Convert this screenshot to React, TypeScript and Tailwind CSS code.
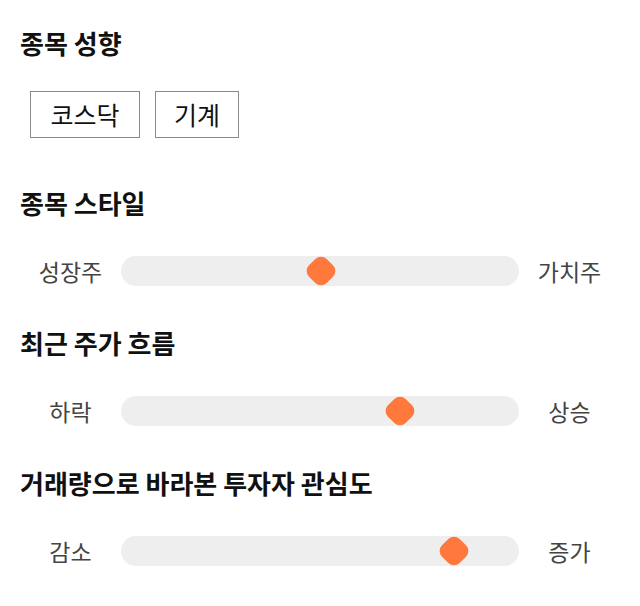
import React from "react";

const font = { fontFamily: '"Noto Sans CJK KR", "Noto Sans", sans-serif' };

type SliderProps = { left: string; right: string; pos: number };

function Slider({ left, right, pos }: SliderProps) {
  return (
    <div className="flex h-[30px] items-center">
      <div className="w-[101px] shrink-0 text-center text-[23px] leading-[30px] text-[#444]">{left}</div>
      <div className="relative h-[30px] w-[398px] shrink-0 rounded-full bg-[#eeeeee]">
        <div
          className="absolute top-1/2 h-[25px] w-[25px] -translate-x-1/2 -translate-y-1/2 rotate-45 rounded-[8px] bg-[#ff783c]"
          style={{ left: `${pos}px` }}
        />
      </div>
      <div className="w-[101px] shrink-0 text-center text-[23px] leading-[30px] text-[#444]">{right}</div>
    </div>
  );
}

function Heading({ children, className }: { children: React.ReactNode; className?: string }) {
  return (
    <h2 className={`h-[36px] text-[26px] font-bold leading-[36px] text-[#111] ${className ?? ""}`}>
      {children}
    </h2>
  );
}

export default function App() {
  return (
    <div className="min-h-[606px] w-[640px] bg-white px-[20px] pt-[25px]" style={font}>
      <Heading>종목 성향</Heading>
      <div className="ml-[10px] mt-[30px] flex gap-[15px]">
        <div className="flex h-[47px] w-[110px] items-center justify-center border border-[#888] text-[25px] text-[#111]">
          코스닥
        </div>
        <div className="flex h-[47px] w-[84px] items-center justify-center border border-[#888] text-[25px] text-[#111]">
          기계
        </div>
      </div>

      <Heading className="mt-[47px]">종목 스타일</Heading>
      <div className="mt-[35px]">
        <Slider left="성장주" right="가치주" pos={200} />
      </div>

      <Heading className="mt-[39px]">최근 주가 흐름</Heading>
      <div className="mt-[35px]">
        <Slider left="하락" right="상승" pos={279} />
      </div>

      <Heading className="mt-[39px]">거래량으로 바라본 투자자 관심도</Heading>
      <div className="mt-[35px]">
        <Slider left="감소" right="증가" pos={333} />
      </div>
    </div>
  );
}
